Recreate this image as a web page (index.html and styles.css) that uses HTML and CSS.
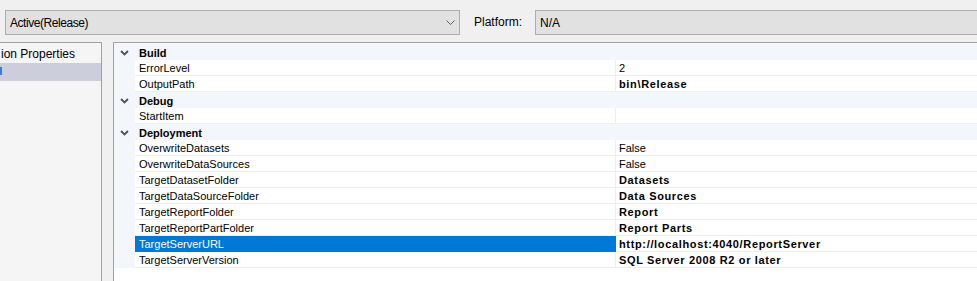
FILE: index.html
```html
<!DOCTYPE html>
<html>
<head>
<meta charset="utf-8">
<link rel="stylesheet" href="styles.css">
</head>
<body>
<div class="toolbar">
  <div class="combo config">
    <span class="combo-text tight">Active(Release)</span>
    <svg class="combo-arrow" width="9" height="5" viewBox="0 0 9 5"><path d="M0.5 0.5 L4.5 4.5 L8.5 0.5" fill="none" stroke="#606060" stroke-width="1"/></svg>
  </div>
  <span class="label">Platform:</span>
  <div class="combo platform"><span class="combo-text">N/A</span></div>
</div>
<div class="main">
  <div class="tree">
    <div class="tree-item">ion Properties</div>
    <div class="tree-item selected"><span class="frag"></span></div>
  </div>
  <div class="grid">
    <div class="cat"><span class="chev"><svg width="9" height="6" viewBox="0 0 9 6"><path d="M1 1 L4.5 4.5 L8 1" fill="none" stroke="#505050" stroke-width="1.8"/></svg></span><span class="cat-name">Build</span></div>
    <div class="prop"><span class="gut"></span><span class="name">ErrorLevel</span><span class="val">2</span></div>
    <div class="prop"><span class="gut"></span><span class="name">OutputPath</span><span class="val bold">bin\Release</span></div>
    <div class="cat"><span class="chev"><svg width="9" height="6" viewBox="0 0 9 6"><path d="M1 1 L4.5 4.5 L8 1" fill="none" stroke="#505050" stroke-width="1.8"/></svg></span><span class="cat-name">Debug</span></div>
    <div class="prop"><span class="gut"></span><span class="name">StartItem</span><span class="val"></span></div>
    <div class="cat"><span class="chev"><svg width="9" height="6" viewBox="0 0 9 6"><path d="M1 1 L4.5 4.5 L8 1" fill="none" stroke="#505050" stroke-width="1.8"/></svg></span><span class="cat-name">Deployment</span></div>
    <div class="prop"><span class="gut"></span><span class="name">OverwriteDatasets</span><span class="val">False</span></div>
    <div class="prop"><span class="gut"></span><span class="name">OverwriteDataSources</span><span class="val">False</span></div>
    <div class="prop"><span class="gut"></span><span class="name">TargetDatasetFolder</span><span class="val bold">Datasets</span></div>
    <div class="prop"><span class="gut"></span><span class="name">TargetDataSourceFolder</span><span class="val bold">Data Sources</span></div>
    <div class="prop"><span class="gut"></span><span class="name">TargetReportFolder</span><span class="val bold">Report</span></div>
    <div class="prop"><span class="gut"></span><span class="name">TargetReportPartFolder</span><span class="val bold">Report Parts</span></div>
    <div class="prop active"><span class="gut"></span><span class="name">TargetServerURL</span><span class="val bold">http://localhost:4040/ReportServer</span></div>
    <div class="prop"><span class="gut"></span><span class="name">TargetServerVersion</span><span class="val bold">SQL Server 2008 R2 or later</span></div>
  </div>
</div>
</body>
</html>
```

FILE: styles.css
```css
html, body {
  margin: 0;
  padding: 0;
  background: #f0f0f0;
  overflow: hidden;
  height: 100%;
}
body {
  font-family: "Liberation Sans", Arial, sans-serif;
  color: #000;
}
.toolbar {
  height: 42px;
  display: flex;
  align-items: flex-start;
  padding-top: 10px;
  padding-left: 5px;
  box-sizing: border-box;
  overflow: hidden;
}
.combo {
  height: 25px;
  box-sizing: border-box;
  border: 1px solid #adadad;
  background: #e1e1e1;
  display: flex;
  align-items: center;
  font-size: 12px;
}
.config {
  width: 455px;
  padding-left: 4px;
  padding-right: 4px;
}
.combo-text {
  flex: 1;
  white-space: nowrap;
}
.tight {
  letter-spacing: -0.45px;
}
.combo-arrow {
  display: block;
}
.label {
  font-size: 12px;
  margin-left: 14px;
  width: 61px;
  line-height: 25px;
  white-space: nowrap;
}
.platform {
  flex: 1;
  margin-right: -4px;
  padding-left: 4px;
}
.main {
  display: flex;
  height: calc(100% - 42px);
}
.tree {
  width: 101px;
  background: #f5f5f5;
  border-top: 1px solid #a0a0a0;
  border-right: 1px solid #a0a0a0;
  font-size: 12px;
  padding-top: 2px;
  overflow: hidden;
  flex-shrink: 0;
}
.tree-item {
  height: 18px;
  line-height: 18px;
  white-space: nowrap;
  padding-left: 1px;
}
.tree-item.selected {
  background: #cccedb;
  overflow: hidden;
}
.frag {
  display: block;
  width: 2px;
  height: 8px;
  background: #3a7bd5;
  margin-top: 4px;
  margin-left: -1px;
}
.grid {
  flex: 1;
  margin-left: 11px;
  background: #fff;
  border-top: 1px solid #a0a0a0;
  border-left: 1px solid #a0a0a0;
  padding-top: 1px;
  font-size: 11px;
}
.cat {
  height: 16px;
  background: #f3f6fb;
  display: flex;
  align-items: center;
}
.chev {
  width: 21px;
  height: 16px;
  display: flex;
  align-items: center;
  justify-content: center;
  box-sizing: border-box;
  padding-top: 1px;
}
.chev svg {
  display: block;
}
.cat-name {
  font-weight: bold;
  padding-left: 4px;
  padding-top: 2px;
  line-height: 14px;
}
.prop {
  height: 16px;
  display: flex;
}
.gut {
  width: 21px;
  background: #f3f6fb;
  flex-shrink: 0;
}
.name {
  width: 481px;
  flex-shrink: 0;
  border-bottom: 1px solid #eaeef5;
  border-right: 1px solid #eaeef5;
  padding-left: 4px;
  padding-top: 2px;
  box-sizing: border-box;
  line-height: 13px;
  white-space: nowrap;
}
.val {
  flex: 1;
  border-bottom: 1px solid #eaeef5;
  padding-left: 3px;
  padding-top: 2px;
  box-sizing: border-box;
  line-height: 13px;
  white-space: nowrap;
}
.bold {
  font-weight: bold;
  letter-spacing: 0.65px;
}
.prop.active .name {
  background: #0078d7;
  color: #fff;
  border-color: #0078d7;
}
```
